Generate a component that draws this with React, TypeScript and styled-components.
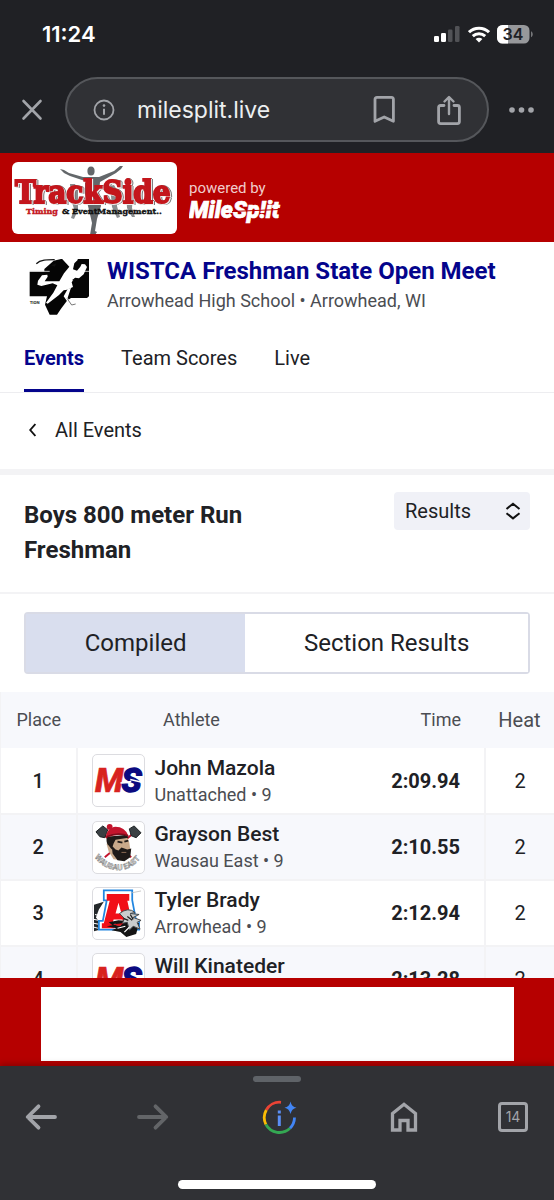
import React from "react";
import styled, { createGlobalStyle, css } from "styled-components";

const GlobalStyle = createGlobalStyle`
  *, *::before, *::after { box-sizing: border-box; }
  body { margin: 0; background: #202125; font-family: Roboto, "Liberation Sans", sans-serif; color: #202125; }
  button, input, select { font: inherit; color: inherit; border: 0; padding: 0; margin: 0; background: none; }
  h1, h2, p { margin: 0; }
  a { color: inherit; text-decoration: none; }
  svg { display: block; flex: none; }
`;

const Screen = styled.div`
  display: flex;
  flex-direction: column;
  height: 100vh;
  overflow: hidden;
  background: #fff;
`;

/* ---------- phone and browser chrome ---------- */

const TopChrome = styled.header`
  flex: none;
  background: #202125;
  color: #fff;
  font-family: Inter, "Liberation Sans", sans-serif;
`;

const StatusBar = styled.div`
  display: flex;
  align-items: center;
  justify-content: space-between;
  height: 77px;
  padding: 0 21px 9px 42px;
`;

const Clock = styled.time`
  font-size: 22px;
  line-height: 28px;
  font-weight: 600;
`;

const StatusIcons = styled.div`
  display: flex;
  align-items: center;
  gap: 7px;
`;

const AddressRow = styled.div`
  display: flex;
  align-items: center;
  justify-content: space-between;
  padding: 0 19px 11px 20px;
  color: #a2a4a9;
`;

const IconButton = styled.button`
  display: grid;
  place-items: center;
  flex: none;
  cursor: pointer;
`;

const AddressPill = styled.div`
  display: flex;
  align-items: center;
  flex: 1;
  min-width: 0;
  height: 65px;
  margin: 0 19px 0 21px;
  padding: 0 25px 0 26px;
  border: 2px solid #55575b;
  border-radius: 33px;
  background: #303135;
`;

const AddressInput = styled.input`
  flex: 1;
  min-width: 0;
  margin: 0 12px 0 22px;
  color: #eceef0;
  font-size: 23px;
  line-height: 30px;
  outline: none;
`;

const PillActions = styled.div`
  display: flex;
  align-items: center;
  gap: 40px;
`;

const Toolbar = styled.nav`
  display: flex;
  flex-direction: column;
  align-items: center;
  flex: none;
  height: 134px;
  padding: 10px 0 11px;
  background: #303135;
  box-shadow: 0 -2px 6px rgba(0, 0, 0, 0.25);
  z-index: 1;
`;

const Bar = styled.span<{ $wide?: boolean }>`
  flex: none;
  width: ${(p) => (p.$wide ? "198px" : "48px")};
  height: ${(p) => (p.$wide ? "9px" : "6px")};
  margin-top: ${(p) => (p.$wide ? "auto" : "0")};
  border-radius: 5px;
  background: ${(p) => (p.$wide ? "#fff" : "#5f6368")};
`;

const ToolbarRow = styled.div`
  display: flex;
  justify-content: space-between;
  align-items: center;
  width: 100%;
  height: 36px;
  margin-top: 17px;
  padding: 0 26px 0 25px;
  color: #a2a4a9;
  font-family: Inter, "Liberation Sans", sans-serif;
`;

const LensButton = styled(IconButton)`
  padding: 0 12px;
`;

const TabCount = styled.span`
  display: grid;
  place-items: center;
  width: 30px;
  height: 30px;
  border: 3px solid #a2a4a9;
  border-radius: 4px;
  font-size: 14px;
  line-height: 16px;
`;

/* ---------- page ---------- */

const Page = styled.main`
  flex: 1;
  min-height: 0;
  overflow: hidden;
`;

const Banner = styled.div`
  display: flex;
  align-items: center;
  gap: 12px;
  height: 89px;
  padding: 0 12px;
  background: #b60000;
`;

const SponsorCard = styled.div`
  border-radius: 6px;
  overflow: hidden;
  background: #fff;
`;

const PoweredBlock = styled.div`
  padding-top: 9px;
`;

const PoweredBy = styled.div`
  font-size: 15px;
  line-height: 20px;
  color: #f0cccc;
`;

const MeetHeader = styled.section`
  padding: 13px 24px 0;
  border-bottom: 1px solid #ededf0;
`;

const MeetInfo = styled.div`
  display: flex;
  align-items: center;
  gap: 17px;
  padding: 0 5px;
`;

const MeetTitle = styled.h1`
  font-size: 24px;
  line-height: 32px;
  font-weight: 700;
  color: #04048c;
  white-space: nowrap;
`;

const MeetPlace = styled.p`
  font-size: 18px;
  line-height: 28px;
  color: #4b4d52;
`;

const Tabs = styled.nav`
  display: flex;
  gap: 37px;
  margin-top: 10px;
`;

const Tab = styled.a<{ $active?: boolean }>`
  padding: 17px 0 15px;
  font-size: 20px;
  line-height: 32px;
  border-bottom: 3px solid transparent;
  ${(p) =>
    p.$active &&
    css`
      color: #04048c;
      font-weight: 700;
      border-bottom-color: #04048c;
    `}
`;

const BackLink = styled.a`
  display: flex;
  align-items: center;
  gap: 19px;
  height: 82px;
  padding: 0 29px 2px;
  border-bottom: 6px solid #f3f3f5;
  font-size: 20px;
  line-height: 28px;
`;

const EventHeader = styled.section`
  display: flex;
  align-items: flex-start;
  justify-content: space-between;
  height: 119px;
  padding: 17px 24px 0;
  border-bottom: 2px solid #f3f3f5;
`;

const EventTitle = styled.h2`
  max-width: 280px;
  margin-top: 6px;
  font-size: 24px;
  line-height: 35px;
  font-weight: 700;
`;

const SelectBox = styled.label`
  display: grid;
  grid-template-columns: 1fr 34px;
  align-items: center;
  width: 136px;
  height: 38px;
  border-radius: 4px;
  background: #f0f1f7;

  select {
    grid-area: 1 / 1 / 2 / 3;
    width: 100%;
    height: 100%;
    padding-left: 11px;
    appearance: none;
    font-size: 20px;
  }

  svg {
    grid-area: 1 / 2;
    justify-self: center;
    pointer-events: none;
  }
`;

const Segments = styled.div`
  display: flex;
  margin: 18px 24px;
  height: 62px;
  border: 2px solid #d9dbe6;
  border-radius: 4px;
`;

const Segment = styled.button<{ $active?: boolean }>`
  flex: 1 1 auto;
  font-size: 24px;
  line-height: 32px;
  cursor: pointer;
  background: ${(p) => (p.$active ? "#d9deee" : "#fff")};
`;

const Results = styled.table`
  width: 100%;
  table-layout: fixed;
  border-collapse: collapse;
  border-left: 1px solid #f3f3f5;
`;

const HeadCell = styled.th<{ $right?: boolean; $large?: boolean; $width?: number }>`
  width: ${(p) => (p.$width ? `${p.$width}px` : "auto")};
  height: 56px;
  padding: 0 ${(p) => (p.$right ? "24px" : "0")} 0 0;
  background: #f7f8fc;
  color: #4b4d52;
  font-size: ${(p) => (p.$large ? "20px" : "18px")};
  line-height: 28px;
  font-weight: 400;
  text-align: ${(p) => (p.$right ? "right" : "center")};
`;

const Row = styled.tr`
  height: 66px;
  border-bottom: 2px solid #f3f3f5;
  &:nth-child(even) { background: #f7f8fc; }
`;

const Cell = styled.td<{ $kind: "place" | "athlete" | "time" | "heat" }>`
  padding: 0;
  font-size: 20px;
  line-height: 28px;
  text-align: center;
  ${(p) => p.$kind === "place" && css`font-weight: 500; border-right: 2px solid #f3f3f5;`}
  ${(p) => p.$kind === "athlete" && css`text-align: left; padding-left: 14px;`}
  ${(p) => p.$kind === "time" && css`font-weight: 700; text-align: right; padding-right: 24px;`}
  ${(p) => p.$kind === "heat" && css`border-left: 2px solid #f3f3f5;`}
`;

const Athlete = styled.div`
  display: flex;
  align-items: center;
  gap: 10px;
  white-space: nowrap;
`;

const TeamBadge = styled.span`
  flex: none;
  width: 53px;
  height: 53px;
  padding: 1px;
  border: 1px solid #dcdce0;
  border-radius: 5px;
  overflow: hidden;
  background: #fff;
`;

const AthleteName = styled.div`
  font-size: 21px;
  line-height: 28px;
  font-weight: 500;
`;

const AthleteTeam = styled.div`
  font-size: 18px;
  line-height: 26px;
  color: #4b4d52;
`;

const AdStrip = styled.aside`
  flex: none;
  height: 88px;
  padding: 9px 40px 5px 41px;
  background: #b60000;
`;

const AdSlot = styled.div`
  height: 100%;
  background: #fff;
`;

/* ---------- drawings ---------- */

const SignalIcon = () => (
  <svg width="27" height="18" viewBox="0 0 27 18" aria-hidden="true">
    <rect x="0" y="11" width="5" height="6" rx="1.3" fill="#fff" />
    <rect x="7" y="8" width="5" height="9" rx="1.3" fill="#fff" />
    <rect x="14" y="4.500" width="4.500" height="12.500" rx="1.3" fill="#515256" />
    <rect x="21" y="1" width="4.500" height="16" rx="1.3" fill="#515256" />
  </svg>
);

const WifiIcon = () => (
  <svg width="22" height="17" viewBox="0 0 22 17" fill="none" stroke="#fff" strokeWidth="3" aria-hidden="true">
    <path d="M1 6.200C6.500.8 15.500.8 21 6.200" />
    <path d="M4.800 10.200c3.500-3.300 8.900-3.300 12.400 0" />
    <path d="M11 16.500l-3.400-3.600c1.900-1.700 4.900-1.700 6.800 0z" fill="#fff" stroke="none" />
  </svg>
);

const BatteryIcon = () => (
  <svg width="36" height="19" viewBox="0 0 36 19" role="img" aria-label="Battery 34 percent">
    <rect width="32.500" height="18.500" rx="5.500" fill="#97989b" />
    <path d="M5.500 0H11v18.500H5.500A5.500 5.500 0 0 1 0 13V5.500A5.500 5.500 0 0 1 5.500 0z" fill="#fff" />
    <path d="M34 6.200c2.300.8 2.300 5.300 0 6.100z" fill="#77787b" />
    <text x="16" y="15" textAnchor="middle" fontSize="16" fontWeight="600" fill="#202125">34</text>
  </svg>
);

const CloseIcon = () => (
  <svg width="24" height="24" viewBox="0 0 24 24" fill="none" stroke="currentColor" strokeWidth="2.600" strokeLinecap="round">
    <path d="M3.500 3l17 17.500M20.500 3l-17 17.500" />
  </svg>
);

const InfoIcon = () => (
  <svg width="22" height="22" viewBox="0 0 22 22" fill="none" stroke="currentColor" strokeWidth="1.800">
    <circle cx="11" cy="11" r="9.500" />
    <path d="M11 9.800v6" strokeWidth="2" />
    <circle cx="11" cy="6.600" r="1.300" fill="currentColor" stroke="none" />
  </svg>
);

const BookmarkIcon = () => (
  <svg width="24" height="30" viewBox="0 0 24 30" fill="none" stroke="currentColor" strokeWidth="2.800" strokeLinejoin="round">
    <path d="M3 4.500Q3 2.400 5 2.400H19.500Q21.400 2.400 21.400 4.500V26.300L12.200 22 3 26.300z" />
  </svg>
);

const ShareIcon = () => (
  <svg width="26" height="32" viewBox="0 0 26 32" fill="none" stroke="currentColor" strokeWidth="2.800" strokeLinecap="round" strokeLinejoin="round">
    <path d="M8 11.500H4.600Q2.600 11.500 2.600 13.500V27.600Q2.600 29.600 4.600 29.600H21.400Q23.400 29.600 23.400 27.600V13.500Q23.400 11.500 21.400 11.500H18" />
    <path d="M13 20V3.500M8.500 7.500L13 3l4.500 4.500" strokeWidth="2.400" />
  </svg>
);

const MoreIcon = () => (
  <svg width="27" height="8" viewBox="0 0 27 8" fill="currentColor">
    <circle cx="4" cy="4" r="2.800" />
    <circle cx="13.500" cy="4" r="2.800" />
    <circle cx="23" cy="4" r="2.800" />
  </svg>
);

const ArrowIcon = ({ forward }: { forward?: boolean }) => (
  <svg width="32" height="30" viewBox="0 0 32 30" fill="none" stroke={forward ? "#636568" : "#a2a4a9"} strokeWidth="3.800" strokeLinecap="round" strokeLinejoin="round">
    {forward ? <path d="M2 15H29M18.500 4.300L29.300 15 18.500 25.700" /> : <path d="M30 15H3M13.500 4.300L2.700 15l10.800 10.700" />}
  </svg>
);

const LensIcon = () => (
  <svg width="36" height="36" viewBox="0 0 36 36" fill="none" strokeWidth="2.800">
    <path d="M4.300 11A15 15 0 0 1 19 3.300" stroke="#ea4335" />
    <path d="M4.300 11a15.500 15.500 0 0 0-.4 14.500" stroke="#fbbc04" />
    <path d="M3.900 25.500A15.500 15.500 0 0 0 28 29.300" stroke="#34a853" />
    <path d="M28 29.300A15.500 15.500 0 0 0 32.500 18.500" stroke="#4285f4" />
    <path d="M28.500 2.500q1 5.300 6 6.300-5 1-6 6.300-1-5.300-6-6.300 5-1 6-6.300z" fill="#4285f4" />
    <path d="M17.300 16.500V27" stroke="#5b8ff5" strokeWidth="3" />
    <rect x="15.800" y="11.500" width="3" height="3" fill="#5b8ff5" />
  </svg>
);

const HomeIcon = () => (
  <svg width="28" height="32" viewBox="0 0 28 32" fill="none" stroke="currentColor" strokeWidth="3.300">
    <path d="M2.500 29V12.500L14 3.300l11.500 9.200V29H18V19.500H10V29z" />
  </svg>
);

const ChevronLeftIcon = () => (
  <svg width="7" height="14" viewBox="0 0 7 14" fill="none" stroke="#111" strokeWidth="1.900">
    <path d="M6.400 1L1.200 7l5.200 6" />
  </svg>
);

const SortIcon = () => (
  <svg width="16" height="18" viewBox="0 0 16 18" fill="none" stroke="#111" strokeWidth="2">
    <path d="M1.500 7L8 1.700 14.500 7M1.500 11.200L8 16.400l6.500-5.200" />
  </svg>
);

const TrackSideLogo = () => (
  <svg width="165" height="72" viewBox="0 0 165 72" role="img" aria-label="TrackSide Timing and Event Management">
    <g fill="#63676a">
      <ellipse cx="79" cy="9" rx="3.600" ry="4.500" />
      <path d="M48 7l4 1 5 3 14 4h16l15-6 6-5 3 0-2 3-5 4-16 9-1 10 2 14-4 13-2 12 2 1-2 3h-5l2-12-3-13-4-16V19l-15-5-6-3z" />
      <path d="M58 22h5l3 6v20l-4 9-3-1 3-9-3-10zM98 24l4-1 3 5v16l3 11-3 1-5-11zM114 26h4l3 6-1 14 3 9h-3l-5-9z" opacity=".75" />
    </g>
    <text
      x="3"
      y="41"
      fontFamily='"DejaVu Serif Condensed","DejaVu Serif",serif'
      fontWeight="700"
      fontSize="31"
      fill="#c4161c"
      stroke="#c4161c"
      strokeWidth="1.800"
      style={{ filter: "drop-shadow(1px 1px 0 #eee) drop-shadow(1px 0 0 #777)" }}
    >
      TrackSide
    </text>
    <g fontFamily='"DejaVu Serif",serif' fontWeight="700" fontSize="8" strokeWidth=".4">
      <text x="14" y="52" fill="#c4161c" stroke="#c4161c">Timing</text>
      <text x="50" y="52" fill="#111" stroke="#111">&amp; EventManagement..</text>
    </g>
  </svg>
);

const MileSplitLogo = () => (
  <svg width="98" height="28" viewBox="0 0 98 28" role="img" aria-label="MileSplit">
    <text x="0" y="20" fontFamily="Roboto, sans-serif" fontWeight="900" fontStyle="italic" fontSize="23" fill="#fff" stroke="#fff" strokeWidth=".7">MileSp!it</text>
    <path d="M43 13.500l47-2" stroke="#b60000" strokeWidth="1" />
  </svg>
);

const MeetLogo = () => (
  <svg width="61" height="60" viewBox="27 26 181 180" role="img" aria-label="WISTCA">
    <path d="M72 68l28-25 22-5h84v112l-6 5h-48l-12 8-18 24-12 18H88l-14-30 6-25H28V77h44z" fill="#050505" />
    <path d="M28 75h60M175 75h31" stroke="#bbb" strokeWidth="3" />
    <path d="M48 52c12-12 32-12 55-12" fill="none" stroke="#111" strokeWidth="4" />
    <path d="M122 34l20-2 10 3 8-6h12v12l-10 10-4 18 12 4 10-12 4-8 10 1 6 8-10 22-14 12-12-2-10 14 4 14-18 8-10 2-14 14-34 26-5-3 22-30 12-22-14-6-34 8-12-4 2-12 12-16 16-2 1 6-9 14h44l14-24 16-20z" fill="#fff" />
    <path d="M130 150l12-22 10-4-10 30 12 20 12 2-2 4-16-4z" fill="#fff" />
    <path d="M140 156l14 20 12-3" fill="none" stroke="#333" strokeWidth="2" />
    <path d="M92 57l16-6-4 10zM156 100l10-6-6 12z" fill="#111" />
    <text x="28" y="173" fontSize="13" fontWeight="700" fill="#222">TION</text>
  </svg>
);

const MSLogo = () => (
  <svg width="49" height="49" viewBox="0 0 50 50" role="img" aria-label="MileSplit team">
    <g fontFamily="Roboto, sans-serif" fontWeight="800" fontStyle="italic" fontSize="34">
      <text x="1" y="37" fill="#d8231f" stroke="#d8231f" strokeWidth=".6">M</text>
      <text x="28" y="37" fill="#0b0a80" stroke="#0b0a80" strokeWidth="1.400">S</text>
    </g>
    <path d="M27 27.500l11-1.500M37 24l13 3" stroke="#fff" strokeWidth="1.400" />
  </svg>
);

const WausauLogo = () => (
  <svg width="49" height="49" viewBox="0 0 50 50" role="img" aria-label="Wausau East">
    <path d="M6 9l32 26M42 9L11 35" stroke="#c3152d" strokeWidth="2" />
    <path d="M2 9l7-6 5 4-3 8-5-1zM36 6l5-3 7 7-5 5-5-2z" fill="#3a4043" stroke="#1c2022" />
    <path d="M14 14l19-1 3 7 1 7-3 8-5 3-9-1-5-8-2-7z" fill="#c9a98a" />
    <path d="M13 14q-1 7 2 9l3 4 2-6 2-4 13-2-1-3zM18 23l1 8 5 7 7 1 6-4 1-9-4 1-6-2-3 3-3-1z" fill="#1f1a18" />
    <path d="M24 19l5 1M31 19l4-1M28 30h5" stroke="#1f1a18" strokeWidth="1.800" />
    <path d="M28 30h5" stroke="#8c6a54" strokeWidth="1" />
    <path d="M12 15q0-8 8-11 11-1 15 9-10-3-23 2z" fill="#c3152d" />
    <circle cx="16" cy="4" r="3" fill="#c3152d" />
    <path d="M13 14q11-5 22-1" fill="none" stroke="#7e0d1c" strokeWidth="1.500" />
    <path id="wausau-arc" d="M0 34Q10 48 25 48T50 32" fill="none" />
    <text fontSize="8" fontWeight="700" fill="#e2e2e2" stroke="#888" strokeWidth=".5">
      <textPath href="#wausau-arc" startOffset="1">WAUSAU EAST</textPath>
    </text>
  </svg>
);

const ArrowheadLogo = () => (
  <svg width="49" height="49" viewBox="0 0 50 50" role="img" aria-label="Arrowhead">
    <path d="M0 16l10-3-5 8-3 8 3 4-1 9-4 1z" fill="#24282a" />
    <path d="M1 26l4 1M0 31l5 1M0 35l5 1M0 39l4 1" stroke="#fff" strokeWidth="1" />
    <path d="M10 1.500h29v10l4 21h3v9H5v-9h4l4-21h-3z" fill="#fff" stroke="#2186e0" strokeWidth="1.800" />
    <path d="M13 5h23v7h-2l5 23h3v5H28v-5h2l-1-4H20l-1 4h2v5H8v-5h2l6-23h-3zM22 25h6l-3-11z" fill="#f10f18" fillRule="evenodd" />
    <path d="M15 34l10-2 12 1 9 2-3 11-10 3-6-5-9-2 5-2-10-2 6-1z" fill="#141414" />
    <path d="M26 25q9-7 16-1l-5 1 9 1-6 3 8 3-4 2 3 7-7-3-4 4-2-8-5 1 2-5z" fill="#c9cccd" stroke="#43484b" strokeWidth="1" />
    <path d="M34 28l5 4M37 26l3 5M30 30l5 2" stroke="#222" strokeWidth="1.300" />
    <path d="M21 36l6 1M24 40l8-2M31 44l5-5" stroke="#fff" strokeWidth="1.200" />
    <path d="M19 36l11-1-4 3z" fill="#d8141c" />
    <path d="M38 4l10-2" stroke="#bbb" strokeWidth=".8" />
  </svg>
);

const athletes = [
  { place: 1, name: "John Mazola", team: "Unattached • 9", time: "2:09.94", heat: 2, Logo: MSLogo },
  { place: 2, name: "Grayson Best", team: "Wausau East • 9", time: "2:10.55", heat: 2, Logo: WausauLogo },
  { place: 3, name: "Tyler Brady", team: "Arrowhead • 9", time: "2:12.94", heat: 2, Logo: ArrowheadLogo },
  { place: 4, name: "Will Kinateder", team: "Unattached • 9", time: "2:13.28", heat: 2, Logo: MSLogo },
];

export default function App() {
  return (
    <Screen>
      <GlobalStyle />
      <TopChrome>
        <StatusBar>
          <Clock>11:24</Clock>
          <StatusIcons>
            <SignalIcon />
            <WifiIcon />
            <BatteryIcon />
          </StatusIcons>
        </StatusBar>
        <AddressRow>
          <IconButton aria-label="Close"><CloseIcon /></IconButton>
          <AddressPill>
            <IconButton aria-label="Site information"><InfoIcon /></IconButton>
            <AddressInput aria-label="Address" defaultValue="milesplit.live" />
            <PillActions>
              <IconButton aria-label="Bookmark"><BookmarkIcon /></IconButton>
              <IconButton aria-label="Share"><ShareIcon /></IconButton>
            </PillActions>
          </AddressPill>
          <IconButton aria-label="More"><MoreIcon /></IconButton>
        </AddressRow>
      </TopChrome>

      <Page>
        <Banner>
          <SponsorCard><TrackSideLogo /></SponsorCard>
          <PoweredBlock>
            <PoweredBy>powered by</PoweredBy>
            <MileSplitLogo />
          </PoweredBlock>
        </Banner>

        <MeetHeader>
          <MeetInfo>
            <MeetLogo />
            <div>
              <MeetTitle>WISTCA Freshman State Open Meet</MeetTitle>
              <MeetPlace>Arrowhead High School • Arrowhead, WI</MeetPlace>
            </div>
          </MeetInfo>
          <Tabs>
            <Tab href="#events" $active>Events</Tab>
            <Tab href="#scores">Team Scores</Tab>
            <Tab href="#live">Live</Tab>
          </Tabs>
        </MeetHeader>

        <BackLink href="#all"><ChevronLeftIcon />All Events</BackLink>

        <EventHeader>
          <EventTitle>Boys 800 meter Run Freshman</EventTitle>
          <SelectBox>
            <select aria-label="View" defaultValue="Results">
              <option>Results</option>
            </select>
            <SortIcon />
          </SelectBox>
        </EventHeader>

        <Segments>
          <Segment $active>Compiled</Segment>
          <Segment>Section Results</Segment>
        </Segments>

        <Results>
          <thead>
            <tr>
              <HeadCell $width={76}>Place</HeadCell>
              <HeadCell $width={230}>Athlete</HeadCell>
              <HeadCell $right>Time</HeadCell>
              <HeadCell $width={69} $large>Heat</HeadCell>
            </tr>
          </thead>
          <tbody>
            {athletes.map(({ place, name, team, time, heat, Logo }) => (
              <Row key={place}>
                <Cell $kind="place">{place}</Cell>
                <Cell $kind="athlete">
                  <Athlete>
                    <TeamBadge><Logo /></TeamBadge>
                    <div>
                      <AthleteName>{name}</AthleteName>
                      <AthleteTeam>{team}</AthleteTeam>
                    </div>
                  </Athlete>
                </Cell>
                <Cell $kind="time">{time}</Cell>
                <Cell $kind="heat">{heat}</Cell>
              </Row>
            ))}
          </tbody>
        </Results>
      </Page>

      <AdStrip><AdSlot /></AdStrip>

      <Toolbar>
        <Bar />
        <ToolbarRow>
          <IconButton aria-label="Back"><ArrowIcon /></IconButton>
          <IconButton aria-label="Forward"><ArrowIcon forward /></IconButton>
          <LensButton aria-label="Page insights"><LensIcon /></LensButton>
          <IconButton aria-label="Home"><HomeIcon /></IconButton>
          <IconButton aria-label="Open tabs"><TabCount>14</TabCount></IconButton>
        </ToolbarRow>
        <Bar $wide />
      </Toolbar>
    </Screen>
  );
}
